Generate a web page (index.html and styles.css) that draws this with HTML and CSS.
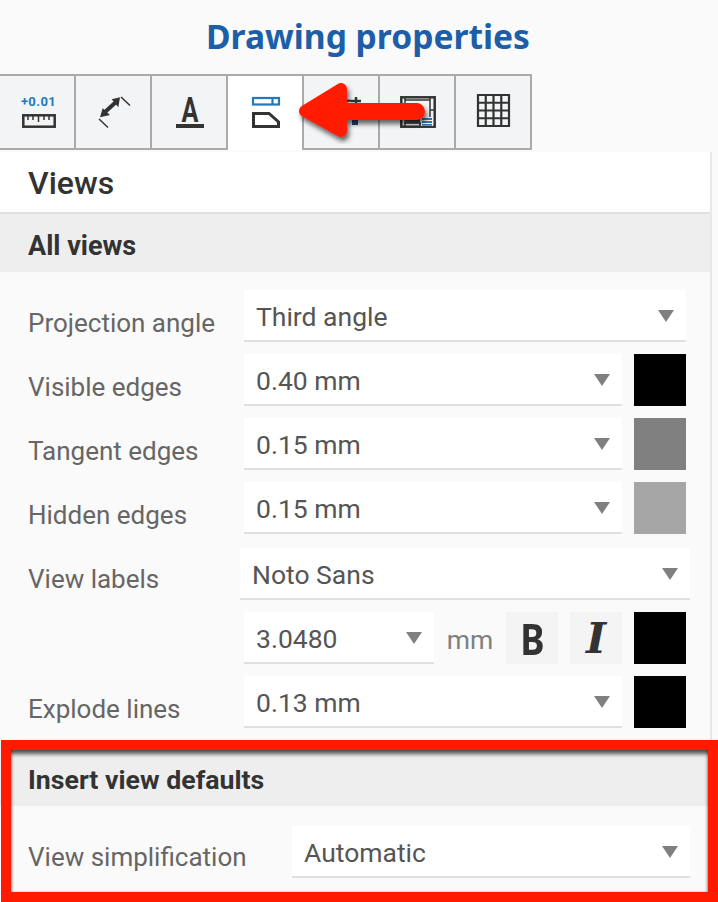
FILE: index.html
```html
<!DOCTYPE html>
<html lang="en">
<head>
<meta charset="utf-8">
<title>Drawing properties</title>
<link rel="stylesheet" href="styles.css">
</head>
<body>
<div class="page">
  <h1 class="title">Drawing properties</h1>
  <div class="tabs">
    <div class="tab">
      <svg class="icon" viewBox="0 0 74 72"><text x="38.500" y="30" class="i-tol">+0.01</text><rect x="23.300" y="39.300" width="31.400" height="11.400" class="i-dark"/><path d="M28 39v5M33 39v5M38.500 39v7M44 39v5M49 39v5" class="i-thin"/></svg>
    </div>
    <div class="tab">
      <svg class="icon" viewBox="0 0 74 72"><path d="M29 36L40 26" class="i-shaft"/><path d="M44 21.300L35.700 23.300 42.300 31.300zM24 41.300L34 39 26.700 32.300z" class="i-fill"/><path d="M45 21l9 8.500M23 43l9 8.500" class="i-thin"/></svg>
    </div>
    <div class="tab">
      <svg class="icon" viewBox="0 0 74 72"><text class="i-a" transform="translate(38 46) scale(.72 1)">A</text><rect x="24" y="48" width="28" height="4" class="i-solid"/></svg>
    </div>
    <div class="tab tab-active">
      <svg class="icon" viewBox="0 0 74 72"><rect x="25" y="22" width="26" height="6.500" class="i-blue"/><path d="M44.500 22v6.500" class="i-blue"/><path d="M25.500 37.500H41L50.500 46v4.500H25.500z" class="i-dark2"/></svg>
    </div>
    <div class="tab">
      <svg class="icon" viewBox="0 0 74 72"><path d="M31 24.700h18" class="i-dash"/><path d="M47 25h10M52 21v8" class="i-dark"/><rect x="36" y="43" width="5" height="6" class="i-navy"/><rect x="48" y="43" width="6" height="6" class="i-navy"/></svg>
    </div>
    <div class="tab">
      <svg class="icon" viewBox="0 0 74 72"><rect x="21.300" y="21.300" width="33.400" height="29.400" class="i-dark"/><path d="M25 21v3M50 21v3M54 34H50M25 47v4M40 47v4" class="i-thin"/><rect x="25" y="24" width="25" height="23" class="i-thin"/><rect x="26" y="42" width="14" height="5" class="i-frame"/><rect x="41" y="41" width="12" height="9" class="i-bg"/><path d="M42 43H52M42 46H52M42 48.800H52" class="i-blue-line"/></svg>
    </div>
    <div class="tab">
      <svg class="icon" viewBox="0 0 74 72"><path d="M22 19H53V50H22zM29.750 19V50M37.500 19V50M45.250 19V50M22 26.750H53M22 34.500H53M22 42.250H53" class="i-grid"/></svg>
    </div>
  </div>

  <div class="panel">
    <div class="panel-head">Views</div>
    <div class="band">All views</div>
    <div class="rows">
      <div class="row">
        <div class="label">Projection angle</div>
        <div class="select"><span>Third angle</span><i class="caret"></i></div>
      </div>
      <div class="row">
        <div class="label">Visible edges</div>
        <div class="select"><span>0.40 mm</span><i class="caret"></i></div>
        <div class="swatch swatch-black"></div>
      </div>
      <div class="row">
        <div class="label">Tangent edges</div>
        <div class="select"><span>0.15 mm</span><i class="caret"></i></div>
        <div class="swatch swatch-mid"></div>
      </div>
      <div class="row row-before-wide">
        <div class="label">Hidden edges</div>
        <div class="select"><span>0.15 mm</span><i class="caret"></i></div>
        <div class="swatch swatch-light"></div>
      </div>
      <div class="row row-wide">
        <div class="label">View labels</div>
        <div class="select"><span>Noto Sans</span><i class="caret"></i></div>
      </div>
      <div class="row">
        <div class="label"></div>
        <div class="select select-size"><span>3.0480</span><i class="caret"></i></div>
        <div class="unit">mm</div>
        <div class="style-btn"><span class="style-b">B</span></div>
        <div class="style-btn"><span class="style-i">I</span></div>
        <div class="swatch swatch-black"></div>
      </div>
      <div class="row">
        <div class="label">Explode lines</div>
        <div class="select"><span>0.13 mm</span><i class="caret"></i></div>
        <div class="swatch swatch-black"></div>
      </div>
    </div>
    <div class="band band-insert">Insert view defaults</div>
    <div class="rows rows-insert">
      <div class="row row-simplify">
        <div class="label">View simplification</div>
        <div class="select"><span>Automatic</span><i class="caret"></i></div>
      </div>
    </div>
  </div>

  <svg class="arrow" viewBox="0 0 150 70" aria-hidden="true">
    <defs><filter id="arrow-shadow" x="-10%" y="-20%" width="125%" height="150%"><feDropShadow dx="2" dy="4" stdDeviation="2.500" flood-color="#000" flood-opacity=".6"/></filter></defs>
    <g filter="url(#arrow-shadow)">
      <path d="M48 10L12 32 48 52z" class="arrow-head"/>
      <path d="M40 32.500H123.500" class="arrow-shaft"/>
    </g>
  </svg>
  <div class="highlight"></div>
</div>
</body>
</html>
```
FILE: styles.css
```css
* { box-sizing: border-box; }
html, body { margin: 0; padding: 0; }
body { background: #fafafa; color: #5c5c5c; font-family: Roboto, "Liberation Sans", sans-serif; }
.page { position: relative; width: 718px; height: 902px; overflow: hidden; background: #fafafa; }

.title { margin: 0; height: 74px; padding: 0 0 2px 18px; display: flex; align-items: center; justify-content: center; font-family: "Noto Sans", sans-serif; font-size: 33.600px; font-weight: 700; color: #1d5ea8; }

.tabs { display: flex; width: 532px; height: 76px; border-top: 2px solid #aaa; border-bottom: 2px solid #aaa; border-right: 2px solid #aaa; background: #f3f4f6; }
.tab { width: 76px; flex: none; border-right: 2px solid #aaa; display: flex; justify-content: center; }
.tab:last-child { border-right: 0; width: 74px; }
.tab-active { background: #fff; margin-bottom: -2px; position: relative; }
.icon { width: 74px; height: 72px; display: block; }

.i-tol { font: 700 13px Roboto, sans-serif; fill: #2479bd; text-anchor: middle; letter-spacing: .4px; }
.i-dark { fill: none; stroke: #333; stroke-width: 2.500; }
.i-dark2 { fill: none; stroke: #333; stroke-width: 3; }
.i-thin { fill: none; stroke: #333; stroke-width: 1.500; }
.i-shaft { fill: none; stroke: #333; stroke-width: 4; }
.i-dash { fill: none; stroke: #333; stroke-width: 2; stroke-dasharray: 4 2; }
.i-grid { fill: none; stroke: #333; stroke-width: 2.200; }
.i-fill { fill: #333; }
.i-solid { fill: #333; }
.i-frame { fill: #4a4a4a; }
.i-bg { fill: #f3f4f6; }
.i-a { font: 700 35px Roboto, sans-serif; fill: #333; text-anchor: middle; }
.i-blue { fill: none; stroke: #2479bd; stroke-width: 2.200; }
.i-blue-line { fill: none; stroke: #2479bd; stroke-width: 1.800; }
.i-navy { fill: #1c4a78; }

.panel { margin-top: 2px; width: 712px; height: 750px; border-right: 2px solid #e8e8e8; background: #fafafa; }
.panel-head { height: 62px; padding: 13px 0 0 28px; background: #fff; border-bottom: 2px solid #e0e0e0; font-size: 32px; line-height: 36px; font-weight: 500; color: #333; }
.band { height: 58px; padding: 15px 0 0 28px; background: #eee; font-size: 27px; line-height: 34px; font-weight: 700; color: #333; }
.band-insert { height: 62px; margin-top: 16px; padding-top: 19px; line-height: 34px; font-size: 26.700px; }

.rows { padding-top: 18px; }
.rows-insert { padding-top: 20px; }
.row { display: flex; gap: 12px; padding: 0 24px 0 28px; height: 52px; margin-bottom: 12px; }
.row-before-wide { margin-bottom: 14px; }
.row-wide { padding-right: 20px; }
.row-wide .label { width: 200px; padding-top: 14px; }
.row-simplify { padding-right: 20px; }
.row-simplify .label { width: 252px; padding-top: 14px; }
.label { flex: none; width: 204px; padding-top: 16px; font-size: 26px; line-height: 34px; white-space: nowrap; color: #666; }
.select { flex: 1; min-width: 0; height: 52px; padding: 2px 12px 0 12px; display: flex; align-items: center; justify-content: space-between; background: #fff; border-bottom: 2px solid #e0e0e0; font-size: 26.500px; color: #555; }
.select-size { flex: none; width: 190px; }
.caret { width: 0; height: 0; border-left: 8px solid transparent; border-right: 8px solid transparent; border-top: 12px solid #808080; margin-top: 0; }
.swatch { flex: none; width: 52px; height: 52px; }
.swatch-black { background: #000; }
.swatch-mid { background: #808080; }
.swatch-light { background: #a6a6a6; }
.unit { width: 48px; padding-top: 12px; text-align: center; font-size: 26.500px; color: #808080; flex: none; }
.style-btn { flex: none; width: 52px; height: 52px; display: flex; align-items: center; justify-content: center; background: #f4f4f4; color: #333; }
.style-b { display: block; font: 700 43px "Noto Sans", sans-serif; transform: scaleX(.85); }
.style-i { display: block; font: italic 700 43px "DejaVu Serif", serif; }

.arrow { position: absolute; left: 293px; top: 79px; width: 150px; height: 70px; overflow: visible; }
.arrow-head { fill: #ff1a00; stroke: #ff1a00; stroke-width: 12; stroke-linejoin: round; }
.arrow-shaft { fill: none; stroke: #ff1a00; stroke-width: 17; stroke-linecap: round; }

.highlight { position: absolute; left: 1px; top: 740px; width: 717px; height: 162px; border: 10.500px solid #ff1a00; box-shadow: inset 0 6px 4px -2px rgba(0,0,0,.65), inset 2px 0 3px -1px rgba(0,0,0,.35), inset -2px 0 3px -1px rgba(0,0,0,.35); pointer-events: none; }
```
